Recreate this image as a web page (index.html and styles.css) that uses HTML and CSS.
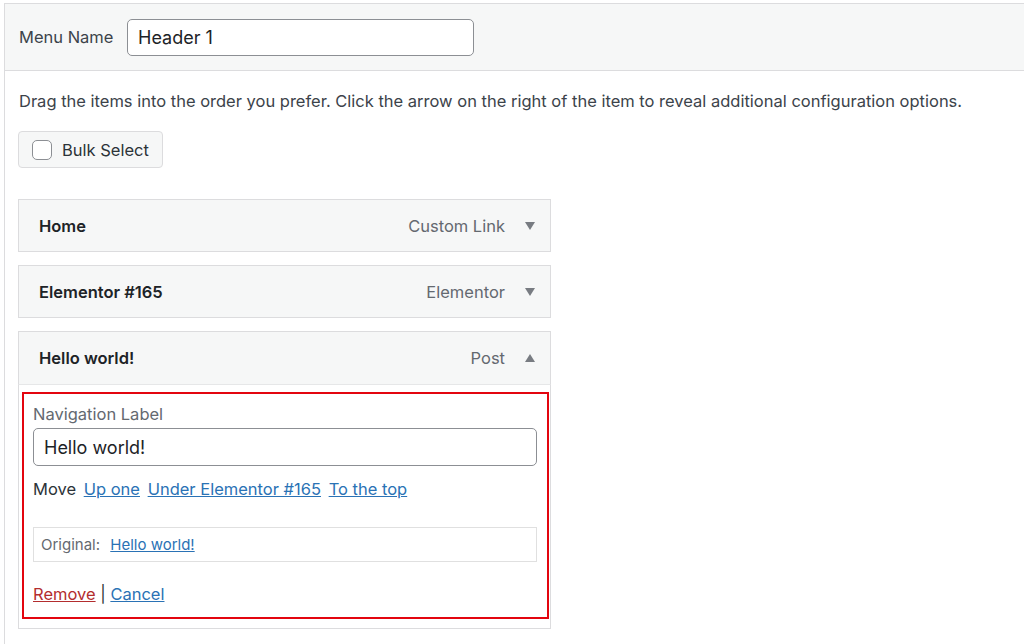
FILE: index.html
```html
<!DOCTYPE html>
<html lang="en">
<head>
<meta charset="utf-8">
<title>Menu</title>
<link rel="stylesheet" href="styles.css">
</head>
<body>
<div class="frame">
  <div class="menu-header">
    <label class="menu-name-label">Menu Name</label>
    <input class="menu-name-input" type="text" value="Header 1">
  </div>
  <div class="menu-body">
    <p class="instructions">Drag the items into the order you prefer. Click the arrow on the right of the item to reveal additional configuration options.</p>
    <div class="bulk-btn"><span class="checkbox"></span><span>Bulk Select</span></div>
    <ul class="items">
      <li class="item">
        <div class="item-bar">
          <span class="item-title">Home</span>
          <span class="item-type">Custom Link</span>
          <span class="arrow down"></span>
        </div>
      </li>
      <li class="item">
        <div class="item-bar">
          <span class="item-title">Elementor #165</span>
          <span class="item-type">Elementor</span>
          <span class="arrow down"></span>
        </div>
      </li>
      <li class="item open">
        <div class="item-bar">
          <span class="item-title">Hello world!</span>
          <span class="item-type">Post</span>
          <span class="arrow up"></span>
        </div>
        <div class="item-settings">
          <div class="highlight">
            <label class="field-label">Navigation Label</label>
            <input class="field-input" type="text" value="Hello world!">
            <div class="move-row">Move <a href="#">Up one</a> <a href="#">Under Elementor #165</a> <a href="#">To the top</a></div>
            <div class="original">Original: <a href="#">Hello world!</a></div>
            <div class="actions"><a href="#" class="remove">Remove</a> | <a href="#">Cancel</a></div>
          </div>
        </div>
      </li>
    </ul>
  </div>
</div>
</body>
</html>
```
FILE: styles.css
```css
html, body {
  margin: 0;
  padding: 0;
  background: #ffffff;
}
body {
  font-family: Inter, "Liberation Sans", sans-serif;
  font-size: 16.5px;
  color: #3c434a;
}
.frame {
  margin-top: 3px;
  margin-left: 4px;
  border-top: 1px solid #dcdcde;
  border-left: 1px solid #dcdcde;
  min-height: 640px;
}
.menu-header {
  background: #f6f7f7;
  border-bottom: 1px solid #dcdcde;
  height: 67px;
  display: flex;
  align-items: center;
  padding-left: 14px;
  box-sizing: border-box;
}
.menu-name-label {
  width: 108px;
  color: #3c434a;
}
.menu-name-input {
  width: 347px;
  height: 37px;
  box-sizing: border-box;
  border: 1px solid #8c8f94;
  border-radius: 5px;
  background: #fff;
  font: inherit;
  font-size: 18px;
  color: #1d2327;
  padding: 0 10px;
  outline: none;
}
.menu-body {
  padding-left: 13px;
}
.instructions {
  margin: 19px 0 0 1px;
  line-height: 22px;
}
.bulk-btn {
  margin-top: 19px;
  width: 145px;
  height: 37px;
  box-sizing: border-box;
  border: 1px solid #dcdcde;
  border-radius: 4px;
  background: #f6f7f7;
  display: flex;
  align-items: center;
  padding-left: 13px;
  gap: 10px;
  color: #2c3338;
}
.checkbox {
  width: 20px;
  height: 20px;
  box-sizing: border-box;
  border: 1px solid #8c8f94;
  border-radius: 5px;
  background: #fff;
}
.items {
  list-style: none;
  margin: 31px 0 0 0;
  padding: 0;
  width: 533px;
}
.item {
  margin-bottom: 13px;
}
.item-bar {
  height: 53px;
  box-sizing: border-box;
  border: 1px solid #dcdcde;
  background: #f6f7f7;
  display: flex;
  align-items: center;
  padding: 0 15px 0 20px;
}
.item-title {
  font-weight: 600;
  color: #1d2327;
  flex: 1;
}
.item-type {
  color: #646970;
  margin-right: 20px;
}
.arrow {
  width: 0;
  height: 0;
  border-left: 5px solid transparent;
  border-right: 5px solid transparent;
}
.arrow.down { border-top: 8px solid #787c82; }
.arrow.up { border-bottom: 8px solid #787c82; }
.item.open .item-bar {
  border-bottom: none;
}
.item-settings {
  border: 1px solid #dcdcde;
  border-top: 1px solid #e6e7e8;
  padding: 7px 1px 9px 3px;
}
.highlight {
  border: 2px solid #e3050f;
  padding: 10px 10px 12px 9px;
}
.field-label {
  display: block;
  color: #646970;
  line-height: 20px;
}
.field-input {
  display: block;
  width: 100%;
  height: 38px;
  margin-top: 4px;
  box-sizing: border-box;
  border: 1px solid #8c8f94;
  border-radius: 5px;
  font: inherit;
  font-size: 18px;
  color: #1d2327;
  padding: 0 10px;
  outline: none;
}
.move-row {
  margin-top: 12px;
  line-height: 22px;
  color: #2c3338;
}
.move-row a { margin-left: 3px; }
a {
  color: #2a72b5;
  text-decoration: underline;
}
.original {
  margin-top: 27px;
  border: 1px solid #e0e0e0;
  padding: 7px 7px;
  font-size: 15px;
  color: #646970;
}
.original a { margin-left: 6px; }
.actions {
  margin-top: 21px;
  line-height: 22px;
  color: #2c3338;
}
.actions a.remove { color: #b32d2e; }
```
